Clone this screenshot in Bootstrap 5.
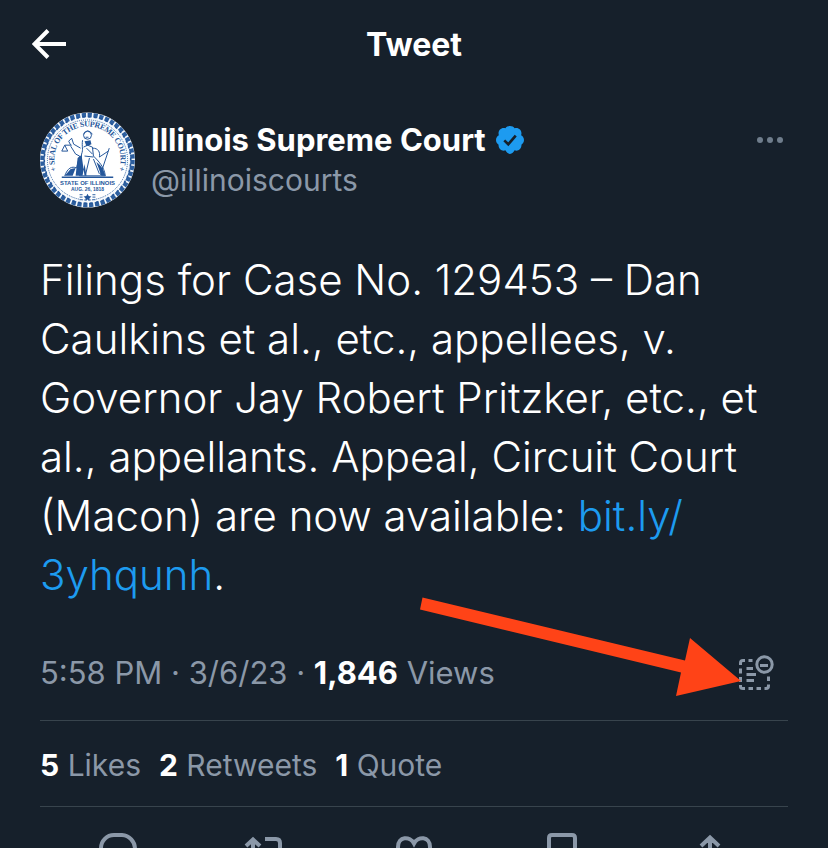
<!DOCTYPE html>
<html lang="en">
<head>
<meta charset="utf-8">
<meta name="viewport" content="width=device-width, initial-scale=1">
<title>Tweet</title>
<link href="https://cdn.jsdelivr.net/npm/bootstrap@5.3.0/dist/css/bootstrap.min.css" rel="stylesheet">
<style>
  body { background: #16202b; color: #fff; font-family: Inter, sans-serif; }
  .screen { padding: 0 40px; }
  .top-bar { height: 90px; margin: 0 -8px; }
  .top-bar h1 { font-size: 32px; line-height: 40px; font-weight: 700; }
  .side { flex: 1 1 0; }
  .plain { display: block; background: none; border: 0; padding: 0; color: inherit; line-height: 0; }
  .muted { color: #8b98a8; }
  .profile { padding-top: 22px; gap: 16px; }
  .who { font-size: 30px; line-height: 40px; padding-top: 8px; }
  .who h2 { font-size: 31px; line-height: 40px; font-weight: 700; gap: 10px; }
  .more { padding: 24px 4px 0 0; color: #6f7d8c; }
  .tweet-text { font-size: 42px; line-height: 59px; font-weight: 350; margin: 42px 0 0; }
  .tweet-text a { color: #1d9bf0; text-decoration: none; }
  .meta { font-size: 31px; line-height: 40px; padding: 49px 14px 27px 0; }
  .rule { border-top: 1px solid #38444d; }
  .meta strong, .counts strong { color: #fff; font-weight: 700; }
  .counts { font-size: 30px; line-height: 40px; padding: 24px 0 21px; gap: 18px; }
  .counts a { color: inherit; text-decoration: none; }
  .actions { padding: 23px 4px; color: #8b98a8; }
  .pointer { top: -7px; right: 46px; pointer-events: none; }
  svg { display: block; flex: none; }
</style>
<script src="https://cdn.jsdelivr.net/npm/bootstrap@5.3.0/dist/js/bootstrap.bundle.min.js"></script>
</head>
<body>
<div class="screen vh-100 overflow-hidden">
  <header class="top-bar d-flex align-items-center">
    <div class="side">
      <button class="plain" type="button" aria-label="Back">
        <svg width="34" height="32" viewBox="0 0 34 32" fill="none" stroke="#fff" stroke-width="4"><path d="M34 15H3M16 1.500L2.500 15 16 28.500"/></svg>
      </button>
    </div>
    <h1 class="m-0">Tweet</h1>
    <div class="side"></div>
  </header>

  <main>
    <article>
      <div class="profile d-flex align-items-start">
        <svg width="95" height="96" viewBox="0 0 96 96" role="img" aria-label="Seal of the Supreme Court, State of Illinois">
          <defs><path id="ring" d="M19 69A36 36 0 1 1 77 69"/></defs>
          <circle cx="48" cy="48" r="48" fill="#f6f9fc"/>
          <circle cx="48" cy="48" r="45.500" fill="none" stroke="#2d5f9f" stroke-width="4.500" stroke-dasharray="4.300 1.650"/>
          <circle cx="48" cy="48" r="43.700" fill="none" stroke="#24569a" stroke-width="1.600" stroke-dasharray="2.500 3.450" stroke-dashoffset="2"/>
          <circle cx="48" cy="48" r="41.500" fill="#fff"/>
          <circle cx="48" cy="48" r="40.500" fill="none" stroke="#2d5f9f" stroke-width="1" stroke-dasharray="1 1"/>
          <g fill="#24569a" font-family="Liberation Serif, serif" font-weight="700">
            <text font-size="8"><textPath href="#ring" startOffset="50%" text-anchor="middle" dominant-baseline="central">+ SEAL OF THE SUPREME COURT +</textPath></text>
            <text x="48" y="73" font-size="6" text-anchor="middle" font-family="Liberation Sans, sans-serif">STATE OF ILLINOIS</text>
            <text x="48" y="79" font-size="5" text-anchor="middle" font-family="Liberation Sans, sans-serif">AUG. 26, 1818</text>
          </g>
          <g fill="none" stroke="#24569a" stroke-width="1">
            <path d="M22 65.500H74" stroke-width="1.500"/>
            <path d="M25 64C28 56 32 54 37 56L40 44 36 42 31 34M25 33H32M25 33L22 39H28L25 33M31 33L29 29 32 26 34 32 41 36"/>
            <path d="M43 28C42 35 44 37 42 42L40 64H66C65 55 59 49 54 44L53 35 48 33 44 35M53 36C59 36 61 40 60 45L69 39M70 36L61 63M45 44L54 45M50 46L46 63M54 47L60 62M47 36L53 42"/>
            <circle cx="48" cy="23" r="4"/><path d="M44 22Q48 15 53 22M46 25H49"/>
          </g>
          <path d="M25 64L31 57 36 56 33 64ZM38 46L42 43 45 64H36ZM45 52L43 64H47ZM57 50Q64 55 66 64H62ZM45 29L51 28 52 32 47 34Z" fill="#24569a"/>
          <path d="M48 82L49.200 84.500 52 84.800 50 86.700 50.500 89.400 48 88 45.500 89.400 46 86.700 44 84.800 46.800 84.500Z" fill="#24569a"/>
          <path d="M40 83H43M40 85.500H43M40 88H43M53 83H56M53 85.500H56M53 88H56" stroke="#5b83b7" stroke-width="1.300"/>
        </svg>
        <div class="who flex-grow-1">
          <h2 class="m-0 d-flex align-items-center">Illinois Supreme Court
            <svg width="28" height="28" viewBox="1.500 1.500 21 21" role="img" aria-label="Verified"><path fill="#1d9bf0" d="M22.500 12c0-1.580-.875-2.950-2.148-3.600.154-.435.238-.905.238-1.400 0-2.210-1.710-3.998-3.818-3.998-.47 0-.92.084-1.336.25C14.818 2.016 13.510 1.500 12 1.500s-2.816.516-3.437 1.752c-.415-.165-.866-.25-1.336-.25-2.110 0-3.818 1.790-3.818 4 0 .494.083.964.237 1.400C2.375 9.050 1.500 10.420 1.500 12c0 1.495.782 2.798 1.942 3.486-.02.17-.032.34-.032.514 0 2.210 1.708 4 3.818 4 .47 0 .92-.086 1.335-.25.62 1.234 1.926 2.750 3.437 2.750s2.818-1.516 3.437-2.750c.415.163.865.248 1.336.248 2.110 0 3.818-1.790 3.818-4 0-.174-.012-.344-.033-.513 1.158-.687 1.943-1.990 1.943-3.485z"/><path d="M7.700 12.300L10.700 15.200 16.300 8.700" fill="none" stroke="#16202b" stroke-width="2"/></svg>
          </h2>
          <div class="muted">@illinoiscourts</div>
        </div>
        <button class="plain more" type="button" aria-label="More options">
          <svg width="28" height="8" viewBox="0 0 28 8" fill="currentColor"><circle cx="4" cy="4" r="3"/><circle cx="14" cy="4" r="3"/><circle cx="24" cy="4" r="3"/></svg>
        </button>
      </div>

      <p class="tweet-text">Filings for Case No. 129453 – Dan Caulkins et al., etc., appellees, v. Governor Jay Robert Pritzker, etc., et al., appellants. Appeal, Circuit Court (Macon) are now available: <a href="#">bit.ly/<wbr>3yhqunh</a>.</p>

      <div class="meta muted d-flex align-items-center justify-content-between position-relative">
        <div>5:58 PM · 3/6/23 · <strong>1,846</strong> Views</div>
        <button class="plain" type="button" aria-label="View details">
          <svg width="36" height="36" viewBox="0 0 36 36" fill="none" stroke="currentColor" stroke-width="3"><path d="M2.500 10V8Q2.500 5.500 5 5.500H7M10.500 5.500H14.500M2.500 13.500V18.500M2.500 22V27M2.500 30V31.500Q2.500 33.500 5 33.500H7M10.500 33.500H15M18.500 33.500H23M26.500 33.500H28Q30.500 33.500 30.500 31V29.500M30.500 26V21.500M8.500 13.500H15M8.500 19.500H18M8.500 25.500H16M22 10.500H30"/><circle cx="26.500" cy="9.500" r="7.700"/></svg>
        </button>
        <svg class="pointer position-absolute" width="322" height="100" viewBox="420 597 322 100" aria-hidden="true"><path fill="#ff4317" d="M422.500 597.500L685 660.500 690 638 741 681 676 696 681 672.500 420 609.500Z"/></svg>
      </div>

      <div class="counts rule muted d-flex">
        <a href="#"><strong>5</strong> Likes</a>
        <a href="#"><strong>2</strong> Retweets</a>
        <a href="#"><strong>1</strong> Quote</a>
      </div>

      <div class="actions rule row row-cols-5 g-0">
        <div class="col d-flex justify-content-center"><button class="plain" type="button" aria-label="Reply"><svg width="40" height="40" viewBox="0 0 40 40" fill="none" stroke="currentColor" stroke-width="4"><path d="M16 5H24A14 14 0 0 1 37 19C37 27 31 29 19 37V31H16A13 13 0 0 1 16 5Z"/></svg></button></div>
        <div class="col d-flex justify-content-center"><button class="plain" type="button" aria-label="Retweet"><svg width="44" height="40" viewBox="0 0 44 40" fill="none" stroke="currentColor" stroke-width="4"><path d="M2 16L9 9.500 16 16M9 10V27Q9 31 13 31H19M21 9H32Q36 9 36 13V31M29 25L36 31.500 43 25"/></svg></button></div>
        <div class="col d-flex justify-content-center"><button class="plain" type="button" aria-label="Like"><svg width="40" height="40" viewBox="0 0 40 40" fill="none" stroke="currentColor" stroke-width="4"><path d="M20 13.500C16 6 4 6 4 17C4 26 13 33 20 37C27 33 36 26 36 17C36 6 24 6 20 13.500Z"/></svg></button></div>
        <div class="col d-flex justify-content-center"><button class="plain" type="button" aria-label="Bookmark"><svg width="40" height="40" viewBox="0 0 40 40" fill="none" stroke="currentColor" stroke-width="4"><path d="M7 37V8Q7 5 10 5H30Q33 5 33 8V37L20 28Z"/></svg></button></div>
        <div class="col d-flex justify-content-center"><button class="plain" type="button" aria-label="Share"><svg width="40" height="40" viewBox="0 0 40 40" fill="none" stroke="currentColor" stroke-width="4"><path d="M11 16L20 7.500 29 16M20 8V28M5 26V33Q5 36 8 36H32Q35 36 35 33V26"/></svg></button></div>
      </div>
    </article>
  </main>
</div>
</body>
</html>
